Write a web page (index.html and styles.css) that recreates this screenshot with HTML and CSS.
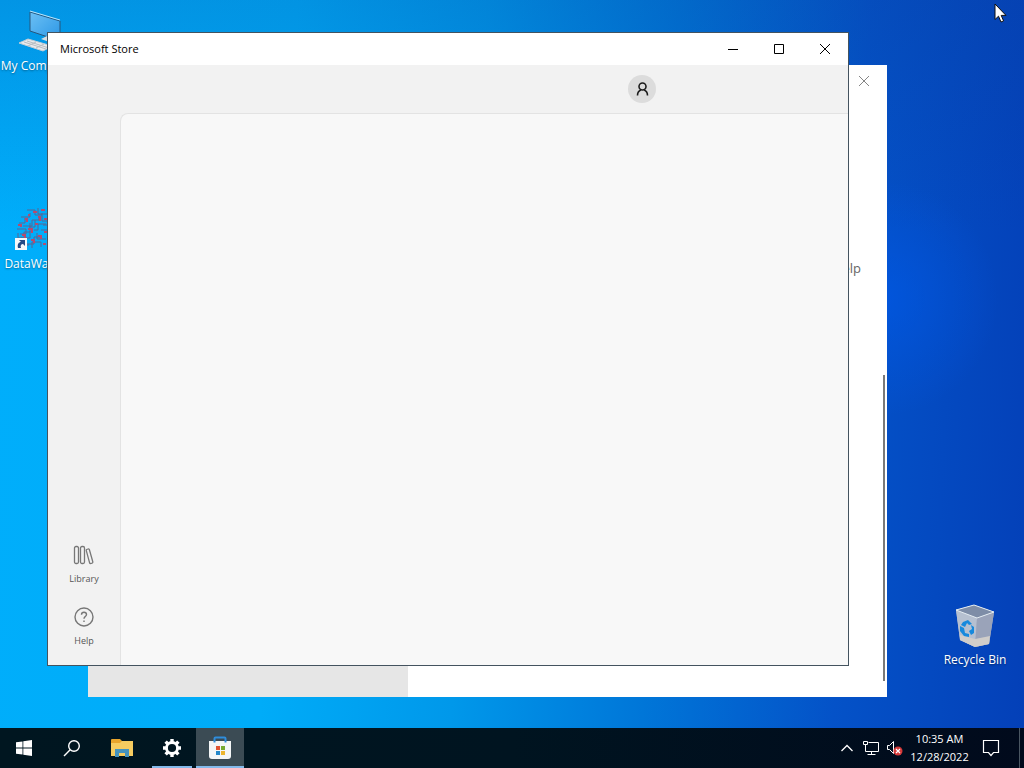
FILE: index.html
```html
<!DOCTYPE html>
<html lang="en">
<head>
    <meta charset="utf-8">
    <title>Desktop</title>
    <link rel="stylesheet" href="styles.css">
</head>
<body>
    <main class="desktop">
        <!-- desktop icons -->
        <a href="#" class="shortcut computer">
            <svg width="48" height="48" viewBox="0 0 48 48">
                <defs>
                    <linearGradient id="screen" x1="0" y1="0" x2="1" y2="1">
                        <stop offset="0" stop-color="#6cc0f4"/>
                        <stop offset="1" stop-color="#2a96e6"/>
                    </linearGradient>
                </defs>
                <path d="M15 5l30 9v20l-30-10z" fill="url(#screen)" stroke="#27567c"/>
                <path d="M15 4l30 9" stroke="#bfe6fb"/>
                <path d="M26 32l6-3 12 4-7 3z" fill="#d5dde2"/>
                <path d="M4 36l9-4 24 7-9 5z" fill="#e9eaec" stroke="#c3cdd4"/>
                <path d="M9 35l22 7M12 34l22 7M13 39l8-4M21 41l8-4" stroke="#b5bcc2"/>
            </svg>
            <span>My Computer</span>
        </a>
        <a href="#" class="shortcut datawagon">
            <svg width="48" height="48" viewBox="0 0 48 48" fill="none">
                <path d="M14 5h8v5h7M25 3v6h9M8 12h9v-4M6 18h6v-5M4 24h9v5H7M10 21h9v-6h7v-4M17 18v9h-6v8M22 15v7h-6M8 33h9v-7M13 39h8v-7h6M19 43v-6h9v5M24 28v6h9M29 8v8h6M30 20h6v-9M28 25h8v8M5 28v5h5v7h6M21 25h4v-6h8" stroke="#566795" stroke-width="1"/>
                <path d="M20 7h4M12 14h2v3M5 20h3v2M15 24h4v4M9 30h3v3M18 35h3v3M25 12h2v4M31 14h3M25 31h3v3M31 27h3M22 19h3M15 10h2M28 5h4M30 39h3" stroke="#b54b70" stroke-width="2"/>
                <path d="M2 33h12v12H2z" fill="#f5f8fa"/>
                <path d="M5 43c-1-4 1-6 3-6l-2-2h6v6l-2-2c-2 0-3 2-2 4z" fill="#234a86"/>
            </svg>
            <span>DataWagon</span>
        </a>
        <a href="#" class="shortcut recycle">
            <svg width="48" height="48" viewBox="0 0 48 48">
                <path d="M5 9l18-5 20 7-5 32-14 3-15-7z" fill="#a9b2c6"/>
                <path d="M5 9l21 8-2 29-15-7z" fill="#b6c0d0"/>
                <path d="M26 17l17-6-5 32-14 3z" fill="#9aa3b9"/>
                <path d="M9 34l15 4 15-3-1 8-14 3-15-7z" fill="#d0cdca"/>
                <path d="M5 9l18-5 20 7-17 6z" fill="#7e8da7" stroke="#e5edf3"/>
                <path d="M12 21l5-2 4 4-3 1-2-2-2 4-4-2zM20 24l3 2v6l-3 2-2-4 3-2zM9 25l4 2 1 5 4 1v3l-5-1-4-5z" fill="#1689dd"/>
            </svg>
            <span>Recycle Bin</span>
        </a>

        <!-- settings window, behind the store -->
        <section class="window settings">
            <div class="settings-side"></div>
            <div class="settings-main">
                <button class="settings-close" aria-label="Close">
                    <svg width="12" height="12" viewBox="0 0 12 12"><path d="M1 1l10 10M11 1L1 11" stroke="#858585"/></svg>
                </button>
                <a href="#" class="get-help">Get help</a>
                <div class="scroll-thumb"></div>
            </div>
        </section>

        <section class="window store">
            <header class="titlebar">
                <h1>Microsoft Store</h1>
                <button aria-label="Minimize">
                    <svg width="12" height="12" viewBox="0 0 12 12"><path d="M1 6.5h10" stroke="#000"/></svg>
                </button>
                <button aria-label="Maximize">
                    <svg width="12" height="12" viewBox="0 0 12 12" fill="none"><path d="M1.5 1.5h9v9h-9z" stroke="#000"/></svg>
                </button>
                <button aria-label="Close">
                    <svg width="12" height="12" viewBox="0 0 12 12"><path d="M1 1l10 10M11 1L1 11" stroke="#000"/></svg>
                </button>
            </header>
            <div class="store-top">
                <button class="account" aria-label="Account">
                    <svg width="16" height="16" viewBox="0 0 16 16" fill="none" stroke="#1c1c1c" stroke-width="1.600"><circle cx="8.500" cy="5.500" r="3.500"/><path d="M3.500 14.500c0-3 1-4.600 3.400-5.400M13.500 14.500c0-3-1-4.600-3.400-5.400"/></svg>
                </button>
            </div>
            <div class="store-body">
                <nav class="store-nav">
                    <a href="#">
                        <svg width="22" height="22" viewBox="0 0 22 22" fill="none" stroke="#777" stroke-width="1.300"><rect x="1.500" y="1.500" width="4" height="17" rx="1.500"/><rect x="7.500" y="1.500" width="4" height="17" rx="1.500"/><path d="M13.600 4.500l1.500-.5q1-.3 1.300.7l3.400 12q.3 1-.7 1.400l-1.200.4q-1 .3-1.300-.7L13.300 5.700q-.3-.9.300-1.200z"/></svg>
                        <span>Library</span>
                    </a>
                    <a href="#">
                        <svg width="22" height="22" viewBox="0 0 22 22" fill="none" stroke="#777" stroke-width="1.400"><circle cx="11" cy="10" r="9"/><path d="M8.500 7.800c0-3.600 5-3.300 5-.3 0 2-2.500 2.200-2.500 4.300M11 13.500v1.500"/></svg>
                        <span>Help</span>
                    </a>
                </nav>
                <div class="store-page"></div>
            </div>
        </section>
    </main>

    <footer class="taskbar">
        <button class="task" aria-label="Start">
            <svg width="16" height="16" viewBox="0 0 16 16" fill="#fff"><path d="M0 2.300l6.500-.9v6.200H0zM7.300 1.300L16 0v7.600H7.300zM0 8.400h6.500v6.200L0 13.700zM7.300 8.400H16V16l-8.700-1.300z"/></svg>
        </button>
        <button class="task" aria-label="Search">
            <svg width="18" height="18" viewBox="0 0 18 18" fill="none" stroke="#fff" stroke-width="1.400"><circle cx="11" cy="7" r="5.300"/><path d="M7.200 10.800L1 17"/></svg>
        </button>
        <button class="task explorer" aria-label="File Explorer">
            <svg width="22" height="18" viewBox="0 0 22 18"><path d="M0 1q0-1 1-1h8l2 2h10q1 0 1 1v14H0z" fill="#e8a52c"/><path d="M0 4h9l2-2h11v15H0z" fill="#f6cc60"/><path d="M4 18v-8h14v8h-4v-4H8v4z" fill="#4593bd"/></svg>
        </button>
        <button class="task gear running" aria-label="Settings">
            <svg width="20" height="20" viewBox="0 0 20 20" fill="none" stroke="#fff"><circle cx="10" cy="10" r="5.500" stroke-width="2.800"/><path d="M10 1v3M10 16v3M1 10h3M16 10h3M3.600 3.600l2.200 2.200M14.200 14.200l2.200 2.200M16.400 3.600l-2.200 2.200M5.800 14.200l-2.200 2.200" stroke-width="3.400"/></svg>
        </button>
        <button class="task running active" aria-label="Microsoft Store">
            <svg width="24" height="24" viewBox="0 0 24 24"><path d="M1 5h22v15q0 3-3 3H4q-3 0-3-3z" fill="#f4f6f7"/><path d="M6.500 6.500V2.500q0-1 1-1h9q1 0 1 1v4" fill="none" stroke="#2f8ddb" stroke-width="2"/><path d="M8 10h4v4H8z" fill="#df5434"/><path d="M13 10h4v4h-4z" fill="#77a930"/><path d="M8 15h4v4H8z" fill="#2587c9"/><path d="M13 15h4v4h-4z" fill="#edb52e"/></svg>
        </button>
        <div class="tray">
            <button aria-label="Show hidden icons">
                <svg width="14" height="16" viewBox="0 0 14 16" fill="none"><path d="M1.500 11L7 5.500l5.500 5.500" stroke="#fff" stroke-width="1.300"/></svg>
            </button>
            <button aria-label="Network">
                <svg width="18" height="16" viewBox="0 0 18 16" fill="none" stroke="#fff"><path d="M6.500 2.500h10v9h-13v-4M9.500 11.500v3M5.500 14.500h8M1.500 1.500h4v3h-4zM3.500 4.500v4"/></svg>
            </button>
            <button aria-label="Volume muted">
                <svg width="18" height="16" viewBox="0 0 18 16" fill="none"><path d="M1.500 5.500h2l4-4v12l-4-4h-2z" stroke="#fff"/><circle cx="12" cy="11" r="4.500" fill="#d63a3a"/><path d="M10 9l4 4M14 9l-4 4" stroke="#fff" stroke-width="1.200"/></svg>
            </button>
            <time class="clock" datetime="2022-12-28T10:35"><span>10:35 AM</span><span>12/28/2022</span></time>
            <button class="notifications" aria-label="Notifications">
                <svg width="18" height="18" viewBox="0 0 18 18" fill="none"><path d="M1.500 1.500h15v12h-5L9 16.500l-2.500-3h-5z" stroke="#fff" stroke-width="1.200"/></svg>
            </button>
            <button class="show-desktop" aria-label="Show desktop"></button>
        </div>
    </footer>

    <svg class="cursor" width="14" height="20" viewBox="0 0 14 20"><path d="M1 1v15.500l3.500-3.300L7 19l2.600-1.100-2.400-5.500H12z" fill="#fff" stroke="#111"/></svg>
</body>
</html>
```
FILE: styles.css
```css
*{
    box-sizing:border-box;
}
body{
    margin:0;
    height:100vh;
    display:flex;
    flex-direction:column;
    overflow:hidden;
    font-family:"Open Sans","Noto Sans",sans-serif;
    font-size:11px;
    line-height:16px;
}
button{
    display:flex;
    align-items:center;
    justify-content:center;
    padding:0;
    border:0;
    background:none;
}
a{
    color:inherit;
    text-decoration:none;
}
svg{
    display:block;
    flex:none;
}

/* desktop */
.desktop{
    position:relative;
    flex:1;
    background:
        radial-gradient(circle at 86% 41%, rgba(0,90,235,.6), rgba(0,90,235,0) 12%),
        linear-gradient(180deg, rgba(10,60,150,.22), rgba(10,60,150,0) 32%),
        linear-gradient(93deg, #00aefb 0%, #00acf8 28%, #0098ea 46%, #0076d8 64%, #0452c8 82%, #0440b8 100%);
}
.shortcut{
    position:absolute;
    width:76px;
    display:flex;
    flex-direction:column;
    align-items:center;
    gap:3px;
    font-size:12px;
    white-space:nowrap;
    color:#fff;
    text-shadow:0 1px 2px rgba(0,0,0,.4);
}
.computer{
    left:1px;
    top:7px;
}
.datawagon{
    left:-1px;
    top:205px;
}
.recycle{
    right:11px;
    top:601px;
}

/* windows */
.window{
    position:absolute;
    display:flex;
}
.settings{
    left:88px;
    top:65px;
    right:137px;
    bottom:31px;
    background:#fff;
}
.settings-side{
    width:40%;
    background:#e6e6e6;
}
.settings-main{
    position:relative;
    flex:1;
    display:flex;
    flex-direction:column;
    align-items:flex-end;
}
.settings-close{
    width:46px;
    height:32px;
}
.get-help{
    margin:160px 26px 0 0;
    font-size:13px;
    line-height:22px;
    color:#666;
}
.scroll-thumb{
    position:absolute;
    right:2px;
    top:49%;
    bottom:16px;
    width:2px;
    background:#7a7a7a;
}
.store{
    left:47px;
    top:32px;
    right:175px;
    bottom:62px;
    flex-direction:column;
    border:1px solid #44535f;
    background:#f2f2f2;
}
.titlebar{
    display:flex;
    height:32px;
    background:#fff;
}
.titlebar h1{
    flex:1;
    margin:0;
    padding-left:12px;
    font-size:11px;
    font-weight:400;
    line-height:32px;
}
.titlebar button{
    width:46px;
}
.store-top{
    display:flex;
    justify-content:flex-end;
    align-items:center;
    height:48px;
    padding-right:192px;
}
.account{
    width:28px;
    height:28px;
    border-radius:50%;
    background:#dcdcdc;
}
.store-body{
    flex:1;
    display:flex;
}
.store-nav{
    width:72px;
    display:flex;
    flex-direction:column;
    justify-content:flex-end;
    gap:20px;
    padding-bottom:16px;
    font-size:9px;
    color:#555;
}
.store-nav a{
    display:flex;
    flex-direction:column;
    align-items:center;
    gap:4px;
}
.store-page{
    flex:1;
    border-top:1px solid #e3e3e3;
    border-left:1px solid #e3e3e3;
    border-top-left-radius:8px;
    background:#f8f8f8;
}

/* taskbar */
.taskbar{
    display:flex;
    height:40px;
    background:linear-gradient(90deg, #001620, #001420 50%, #010a1c);
    color:#fff;
}
.task{
    width:48px;
}
.explorer{
    width:52px;
}
.gear{
    width:40px;
    margin:0 4px;
}
.running{
    border-bottom:2px solid #83b9ea;
    padding-top:2px;
}
.active{
    background:#3b4b54;
}
.tray{
    display:flex;
    margin-left:auto;
}
.tray button{
    width:24px;
}
.clock{
    display:flex;
    flex-direction:column;
    justify-content:center;
    width:65px;
    line-height:18px;
    text-align:center;
}
.tray .notifications{
    width:47px;
    padding-right:9px;
}
.tray .show-desktop{
    width:5px;
    border-left:1px solid #4a5662;
}
.cursor{
    position:absolute;
    right:16px;
    top:3px;
}
```
